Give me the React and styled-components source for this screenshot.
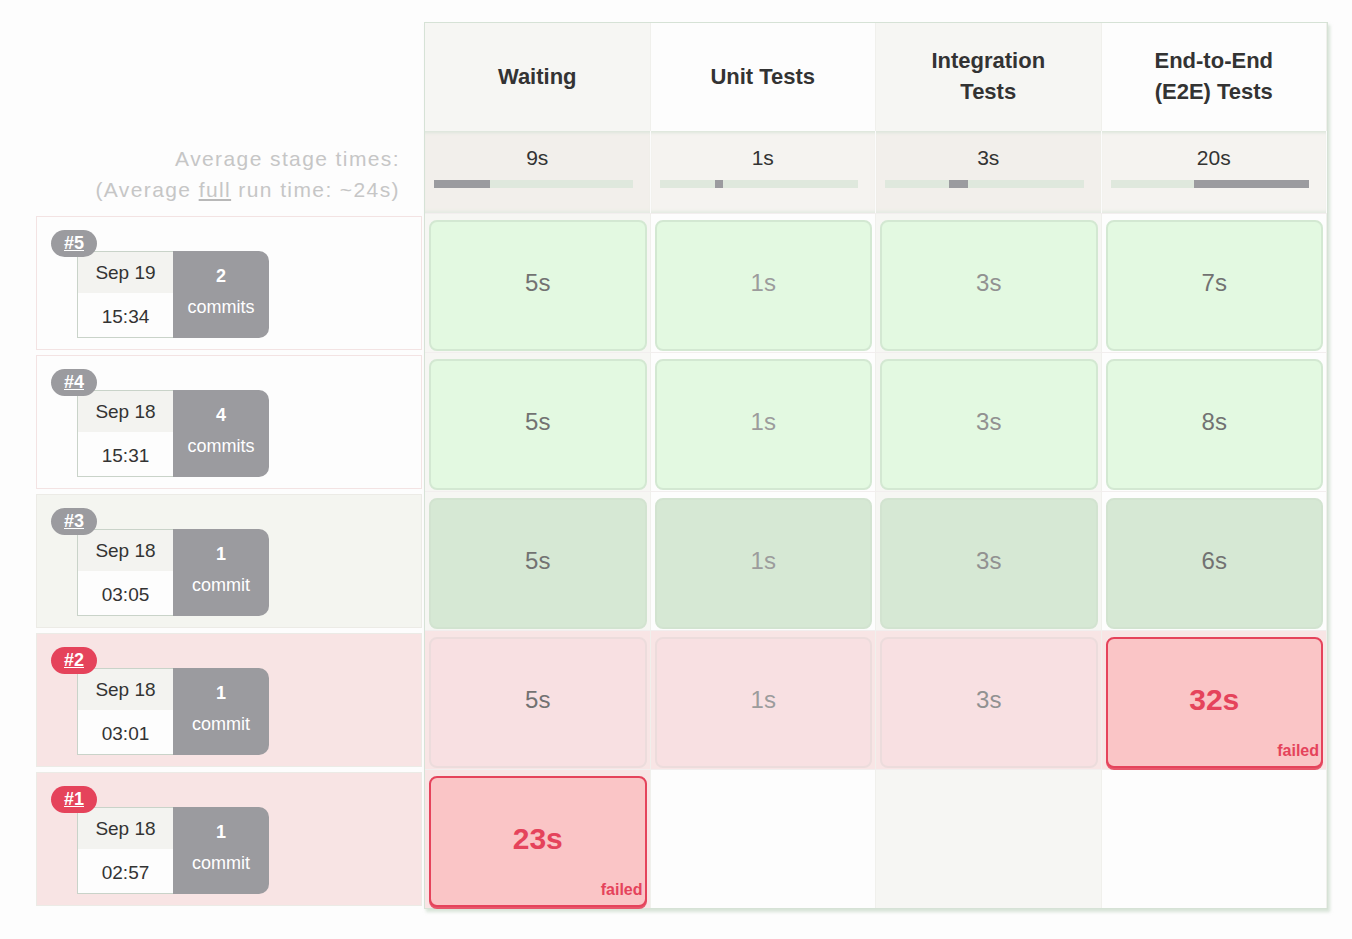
import styled, { createGlobalStyle, css } from "styled-components";

const GlobalStyle = createGlobalStyle`
  body {
    margin: 0;
    background: #fdfdfd;
    font-family: "Liberation Sans", Arial, sans-serif;
  }
`;

const stages = [
  { name: "Waiting", avg: "9s", start: 0, width: 28 },
  { name: "Unit Tests", avg: "1s", start: 28, width: 4 },
  { name: "Integration Tests", avg: "3s", start: 32, width: 10 },
  { name: "End-to-End (E2E) Tests", avg: "20s", start: 42, width: 58 },
];

const builds = [
  { id: 5, date: "Sep 19", time: "15:34", commits: 2, status: "ok", cells: [["5s", 1], ["1s", 3], ["3s", 2], ["7s", 1]] },
  { id: 4, date: "Sep 18", time: "15:31", commits: 4, status: "ok", cells: [["5s", 1], ["1s", 3], ["3s", 2], ["8s", 1]] },
  { id: 3, date: "Sep 18", time: "03:05", commits: 1, status: "unstable", cells: [["5s", 1], ["1s", 3], ["3s", 2], ["6s", 1]] },
  { id: 2, date: "Sep 18", time: "03:01", commits: 1, status: "failed", cells: [["5s", 1], ["1s", 3], ["3s", 2], ["32s", "fail"]] },
  { id: 1, date: "Sep 18", time: "02:57", commits: 1, status: "failed", cells: [["23s", "fail"]] },
];

const Page = styled.div`
  display: flex;
  padding: 22px 0 0 36px;
`;

const LeftColumn = styled.div`
  width: 388px;
  display: flex;
  flex-direction: column;
`;

const HeadSpacer = styled.div`
  height: 109px;
`;

const AvgLabel = styled.div`
  height: 82px;
  box-sizing: border-box;
  padding: 12px 24px 0 0;
  text-align: right;
  color: #c6c6c6;
  font-size: 21px;
  line-height: 31px;
  letter-spacing: 1.4px;
  u {
    text-decoration-color: #b8b8b8;
  }
`;

const rowBg = {
  ok: "#fdfdfd",
  unstable: "#f4f5f0",
  failed: "#f8e4e4",
};

const BuildRow = styled.div`
  height: 139px;
  box-sizing: border-box;
  padding: 3px 2px 2px 0;
`;

const BuildInner = styled.div`
  position: relative;
  height: 100%;
  box-sizing: border-box;
  background: ${(p) => rowBg[p.$status]};
  border: 1px solid ${(p) => (p.$status === "ok" ? "#f3e3e3" : "#ecebe6")};
  padding: 34px 0 0 40px;
`;

const Badge = styled.a`
  position: absolute;
  left: 14px;
  top: 13px;
  width: 46px;
  height: 27px;
  border-radius: 14px;
  background: ${(p) => (p.$failed ? "#e5435b" : "#9b9b9f")};
  color: #fff;
  font-weight: bold;
  font-size: 18px;
  line-height: 27px;
  text-align: center;
  text-decoration: underline;
  z-index: 1;
`;

const Card = styled.div`
  display: flex;
  width: 192px;
  height: 87px;
`;

const DateBox = styled.div`
  width: 96px;
  display: flex;
  flex-direction: column;
  border: 1px solid #c9d3c9;
  border-right: none;
  box-sizing: border-box;
  color: #333;
  font-size: 19px;
  text-align: center;
`;

const DatePart = styled.div`
  flex: 1;
  display: flex;
  align-items: center;
  justify-content: center;
  background: ${(p) => (p.$top ? "#f3f3f0" : "#fdfdfd")};
  padding-top: ${(p) => (p.$top ? "1px" : "4px")};
`;

const CommitBox = styled.div`
  width: 96px;
  background: #9b9b9f;
  border-radius: 0 10px 10px 0;
  color: #fff;
  display: flex;
  flex-direction: column;
  align-items: center;
  padding-top: 15px;
  box-sizing: border-box;
  gap: 10px;
  font-size: 18px;
  line-height: 21px;
`;

const StageTable = styled.div`
  width: 904px;
  border: 1px solid #d6e2d6;
  box-shadow: 2px 3px 3px rgba(190, 210, 190, 0.6);
  display: grid;
  grid-template-columns: repeat(4, 1fr);
  grid-template-rows: 108px 82px repeat(5, 139px);
  box-sizing: border-box;
  margin-bottom: 30px;
`;

const colBg = (i) => (i % 2 === 0 ? "#f6f6f3" : "#fdfdfd");

const StageHead = styled.div`
  background: ${(p) => colBg(p.$i)};
  border-right: 1px solid #f0f0ec;
  display: flex;
  align-items: center;
  justify-content: center;
  text-align: center;
  font-weight: bold;
  font-size: 22px;
  line-height: 31px;
  color: #333;
  padding: 0 36px 2px;
`;

const AvgCell = styled.div`
  background: ${(p) => (p.$i % 2 === 0 ? "#f2efeb" : "#f5f3f0")};
  box-shadow: inset 0 4px 3px -2px #dde6dc, inset 0 -4px 3px -2px #e4ebe2;
  border-right: 1px solid #fbfbfb;
  display: flex;
  flex-direction: column;
  align-items: center;
  padding-top: 15px;
  font-size: 21px;
  color: #333;
`;

const Track = styled.div`
  position: relative;
  align-self: stretch;
  height: 8px;
  margin: 10px 17px 0 9px;
  background: #dfe8dd;
`;

const Fill = styled.div`
  position: absolute;
  top: 0;
  bottom: 0;
  background: #9b9b9f;
`;

const Slot = styled.div`
  background: ${(p) => (p.$failedRow ? "#f8e5e5" : colBg(p.$i))};
  border-right: 1px solid #f0f0ec;
  border-top: 1px solid #f2eeee;
  padding: 6px 3px 1px 4px;
  box-sizing: border-box;
`;

const cellStyles = {
  ok: css`
    background: #e3f9e1;
    border: 2px solid #d3e8d2;
  `,
  unstable: css`
    background: #d6e8d4;
    border: 2px solid #d2e3d0;
  `,
  failed: css`
    background: #f8e0e2;
    border: 2px solid #ecdcdc;
  `,
  fail: css`
    background: #fac5c6;
    border: 2px solid #e5435b;
    box-shadow: 0 2px 0 #e7566a;
  `,
};

const greys = { 1: "#727272", 2: "#919191", 3: "#9c9c9c" };

const StageCell = styled.div`
  position: relative;
  height: 131px;
  box-sizing: border-box;
  border-radius: 8px;
  display: flex;
  align-items: center;
  justify-content: center;
  padding-bottom: 5px;
  font-size: 24px;
  color: ${(p) => greys[p.$shade] || "#777"};
  ${(p) => cellStyles[p.$kind]}
  ${(p) =>
    p.$kind === "fail" &&
    css`
      color: #e5435b;
      font-weight: bold;
      font-size: 30px;
    `}
`;

const FailedTag = styled.span`
  position: absolute;
  right: 2px;
  bottom: 6px;
  font-size: 16px;
  font-weight: bold;
  color: #e5435b;
`;

export default function App() {
  return (
    <Page>
      <GlobalStyle />
      <LeftColumn>
        <HeadSpacer />
        <AvgLabel>
          Average stage times:
          <br />
          (Average <u>full</u> run time: ~24s)
        </AvgLabel>
        {builds.map((b) => (
          <BuildRow key={b.id}>
            <BuildInner $status={b.status}>
              <Badge $failed={b.status === "failed"}>#{b.id}</Badge>
              <Card>
                <DateBox>
                  <DatePart $top>{b.date}</DatePart>
                  <DatePart>{b.time}</DatePart>
                </DateBox>
                <CommitBox>
                  <b>{b.commits}</b>
                  <span>{b.commits === 1 ? "commit" : "commits"}</span>
                </CommitBox>
              </Card>
            </BuildInner>
          </BuildRow>
        ))}
      </LeftColumn>
      <StageTable>
        {stages.map((s, i) => (
          <StageHead key={s.name} $i={i}>
            {s.name}
          </StageHead>
        ))}
        {stages.map((s, i) => (
          <AvgCell key={s.name} $i={i}>
            {s.avg}
            <Track>
              <Fill style={{ left: `${s.start}%`, width: `${s.width}%` }} />
            </Track>
          </AvgCell>
        ))}
        {builds.map((b) =>
          stages.map((s, i) => {
            const cell = b.cells[i];
            const failedRow = b.status === "failed" && !!cell;
            return (
              <Slot key={`${b.id}-${i}`} $i={i} $failedRow={failedRow}>
                {cell && (
                  <StageCell
                    $kind={cell[1] === "fail" ? "fail" : b.status}
                    $shade={cell[1]}
                  >
                    {cell[0]}
                    {cell[1] === "fail" && <FailedTag>failed</FailedTag>}
                  </StageCell>
                )}
              </Slot>
            );
          })
        )}
      </StageTable>
    </Page>
  );
}
